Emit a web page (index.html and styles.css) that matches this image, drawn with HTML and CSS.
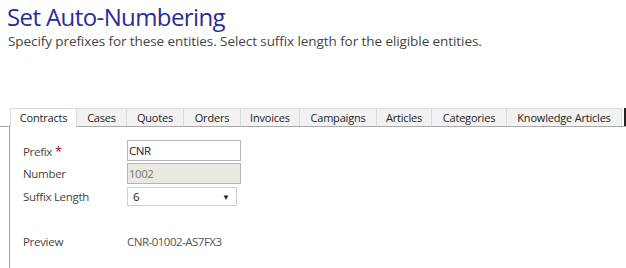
FILE: index.html
```html
<!DOCTYPE html>
<html lang="en">

<head>
    <meta charset="UTF-8">
    <title>Set Auto-Numbering</title>
    <link rel="stylesheet" href="styles.css">
</head>

<body>
    <div class="page">
        <h1 class="title">Set Auto-Numbering</h1>
        <p class="desc">Specify prefixes for these entities. Select suffix length for the eligible entities.</p>

        <!--tabs-->
        <div class="tabs">
            <span class="tab current" style="width: 67px">Contracts</span>
            <span class="tab" style="width: 50px">Cases</span>
            <span class="tab" style="width: 57px">Quotes</span>
            <span class="tab" style="width: 57px">Orders</span>
            <span class="tab" style="width: 59px">Invoices</span>
            <span class="tab" style="width: 77px">Campaigns</span>
            <span class="tab" style="width: 55px">Articles</span>
            <span class="tab" style="width: 75px">Categories</span>
            <span class="tab" style="width: 115px">Knowledge Articles</span>
            <span class="edge"></span>
        </div>

        <!--form-->
        <div class="panel">
            <div class="row">
                <label class="label">Prefix<span class="req">*</span></label>
                <input class="field" type="text" value="CNR">
            </div>
            <div class="row">
                <label class="label">Number</label>
                <input class="field readonly" type="text" value="1002" readonly>
            </div>
            <div class="row">
                <label class="label">Suffix Length</label>
                <div class="select">
                    <span>6</span>
                    <span class="arrow">&#9660;</span>
                </div>
            </div>
            <div class="row preview">
                <label class="label">Preview</label>
                <span class="value">CNR-01002-AS7FX3</span>
            </div>
        </div>
    </div>
</body>

</html>
```

FILE: styles.css
```css
* {
    margin: 0;
    padding: 0;
    box-sizing: border-box;
}

body {
    background-color: #fff;
    font-family: "Open Sans", "Noto Sans", sans-serif;
    color: #444;
    overflow: hidden;
}

.page {
    width: 626px;
    height: 268px;
}

.title {
    padding: 1px 0 0 7px;
    font-size: 24px;
    font-weight: normal;
    line-height: 32px;
    color: #2b2b99;
    letter-spacing: -0.6px;
}

.desc {
    padding-left: 8px;
    font-size: 13.5px;
    line-height: 17px;
    color: #444;
    letter-spacing: -0.08px;
}

.tabs {
    display: flex;
    margin-top: 58px;
    padding-left: 10px;
    height: 19px;
    border-bottom: 1px solid #a8a8a8;
}

.tab {
    display: block;
    height: 18px;
    background-color: #f2f2f2;
    border: 1px solid #dcdcdc;
    border-bottom: none;
    border-left: none;
    font-size: 11px;
    line-height: 17px;
    text-align: center;
    color: #222;
    letter-spacing: -0.2px;
    white-space: nowrap;
}

.tab:first-child {
    border-left: 1px solid #dcdcdc;
}

.tab.current {
    background-color: #fff;
    height: 19px;
}

.edge {
    width: 2px;
    height: 18px;
    margin-left: 2px;
    background-color: #222;
}

.panel {
    margin-left: 9px;
    height: 142px;
    padding-top: 13px;
    border-left: 1px solid #a8a8a8;
}

.row {
    display: flex;
    align-items: center;
    height: 21px;
    margin-bottom: 2px;
}

.label {
    width: 117px;
    padding-left: 13px;
    font-size: 11.5px;
    color: #444;
    letter-spacing: -0.3px;
}

.req {
    margin-left: 3px;
    color: #a4001c;
    font-size: 13px;
}

.field {
    width: 114px;
    height: 21px;
    padding: 0 1px;
    border: 1px solid #b5b5b5;
    font-family: "Open Sans", "Noto Sans", sans-serif;
    font-size: 11.5px;
    color: #222;
    letter-spacing: -0.5px;
    outline: none;
}

.field.readonly {
    background-color: #e9e8e2;
    color: #777;
}

.select {
    display: flex;
    justify-content: space-between;
    align-items: center;
    width: 110px;
    height: 19px;
    padding: 0 6px 0 5px;
    border: 1px solid #d0d0d0;
    font-size: 11.5px;
    color: #222;
}

.arrow {
    font-size: 8px;
    color: #222;
}

.preview {
    margin-top: 24px;
}

.value {
    font-size: 11.5px;
    color: #555;
    letter-spacing: -0.5px;
}
```
